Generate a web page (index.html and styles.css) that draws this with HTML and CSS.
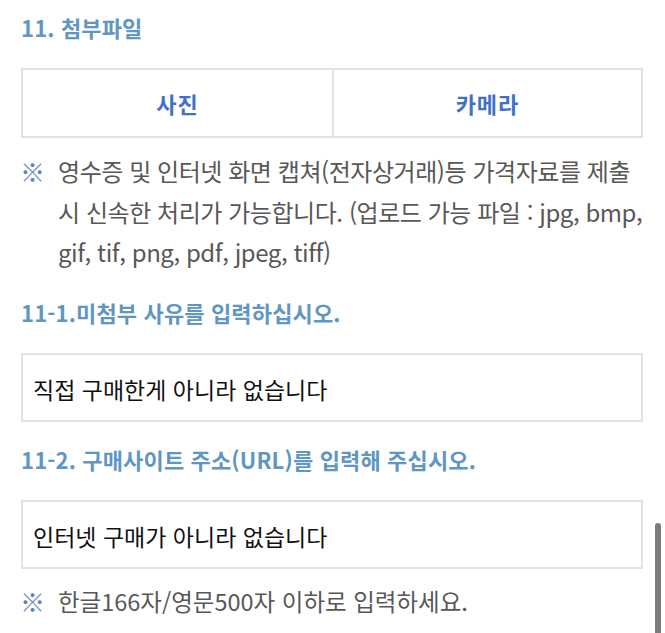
FILE: index.html
```html
<!DOCTYPE html>
<html lang="ko">
<head>
<meta charset="utf-8">
<link rel="stylesheet" href="styles.css">
</head>
<body>
<main class="page">
  <h2 class="sec-title">11. 첨부파일</h2>
  <div class="btn-row">
    <button class="btn">사진</button>
    <button class="btn">카메라</button>
  </div>
  <p class="note"><span class="mark">※</span><span class="note-text">영수증 및 인터넷 화면 캡쳐(전자상거래)등 가격자료를 제출시 신속한 처리가 가능합니다. (업로드 가능 파일 : jpg, bmp, gif, tif, png, pdf, jpeg, tiff)</span></p>

  <h2 class="sec-title">11-1.미첨부 사유를 입력하십시오.</h2>
  <div class="field">직접 구매한게 아니라 없습니다</div>

  <h2 class="sec-title sec-title-tight">11-2. 구매사이트 주소(URL)를 입력해 주십시오.</h2>
  <div class="field">인터넷 구매가 아니라 없습니다</div>
  <p class="note note-last"><span class="mark">※</span><span class="note-text">한글166자/영문500자 이하로 입력하세요.</span></p>
</main>
<div class="scrollbar"></div>
</body>
</html>
```

FILE: styles.css
```css
html, body {
  margin: 0;
  padding: 0;
  background: #ffffff;
  height: 633px;
  overflow: hidden;
}

body {
  font-family: "Noto Sans CJK KR", "Noto Sans", sans-serif;
  position: relative;
}

.page {
  padding: 11px 22px 0 21px;
  display: flex;
  flex-direction: column;
}

.sec-title {
  margin: 0 0 25px;
  font-size: 22px;
  line-height: 32px;
  font-weight: 700;
  color: #5f96c2;
  letter-spacing: 0.15px;
}

.sec-title-tight {
  margin-top: -1px;
}

.btn-row {
  display: grid;
  grid-template-columns: 1fr 1fr;
  height: 70px;
  border: 2px solid #e2e2e2;
  box-sizing: border-box;
}

.btn {
  border: 0;
  background: #fff;
  font-family: inherit;
  font-size: 22px;
  font-weight: 700;
  color: #3f72c6;
  letter-spacing: 1px;
  padding: 0;
}

.btn + .btn {
  border-left: 2px solid #e2e2e2;
}

.note {
  margin: 13px 0 23px;
  display: flex;
  font-size: 24px;
  line-height: 40.5px;
  color: #585858;
  letter-spacing: -0.45px;
}

.mark {
  flex: 0 0 38px;
  margin-left: -1px;
  color: #5a82c0;
  font-size: 25px;
}

.note-text {
  flex: 1;
}

.note-last {
  font-size: 23.5px;
  letter-spacing: 0;
}

.field {
  height: 69px;
  box-sizing: border-box;
  border: 2px solid #e2e2e2;
  display: flex;
  align-items: center;
  padding: 4px 0 0 10px;
  font-size: 23px;
  color: #111;
  letter-spacing: 0;
  margin-bottom: 22px;
}

.field + .note {
  margin-top: -10px;
}

.scrollbar {
  position: absolute;
  left: 655px;
  top: 523px;
  width: 6px;
  height: 130px;
  border-radius: 3px;
  background: #7b7b7b;
}
```
